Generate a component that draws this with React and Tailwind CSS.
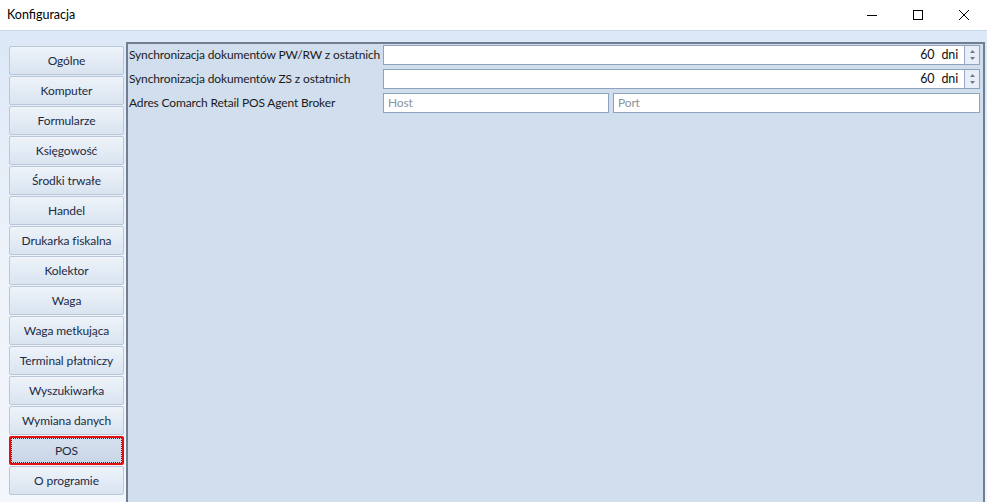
import React from 'react';

const ITEMS = [
  'Ogólne',
  'Komputer',
  'Formularze',
  'Księgowość',
  'Środki trwałe',
  'Handel',
  'Drukarka fiskalna',
  'Kolektor',
  'Waga',
  'Waga metkująca',
  'Terminal płatniczy',
  'Wyszukiwarka',
  'Wymiana danych',
  'POS',
  'O programie',
];

const font = { fontFamily: 'Lato, "Noto Sans", sans-serif' };

function Spinner() {
  return (
    <div className="w-[15px] h-full flex flex-col items-center justify-center bg-[#e7eef7] border-l border-[#9aabc0] text-[#6b7b8f]">
      <svg width="7" height="14" viewBox="0 0 7 14">
        <path d="M3.5 2 L6 5 L1 5 Z" fill="currentColor" />
        <path d="M1 9 L6 9 L3.5 12 Z" fill="currentColor" />
      </svg>
    </div>
  );
}

function DaysField() {
  return (
    <div className="flex-1 h-[20px] flex bg-white border border-[#8fa3bd]">
      <div className="flex-1 flex items-center justify-end pr-[6px] text-[12.5px] text-[#111]">
        <span>60</span>
        <span className="ml-[7px]">dni</span>
      </div>
      <Spinner />
    </div>
  );
}

export default function App() {
  return (
    <div className="w-[987px] h-[502px] bg-white flex flex-col overflow-hidden" style={font}>
      {/* title bar */}
      <div className="h-[30px] flex items-center justify-between shrink-0">
        <span className="pl-[7px] text-[12.5px] text-black">Konfiguracja</span>
        <div className="flex items-center h-full">
          <div className="w-[46px] flex justify-center">
            <svg width="10" height="10" viewBox="0 0 10 10"><path d="M0 5.5 H10" stroke="#000" strokeWidth="1" /></svg>
          </div>
          <div className="w-[46px] flex justify-center">
            <svg width="10" height="10" viewBox="0 0 10 10"><rect x="0.5" y="0.5" width="9" height="9" fill="none" stroke="#000" strokeWidth="1" /></svg>
          </div>
          <div className="w-[46px] flex justify-center">
            <svg width="10" height="10" viewBox="0 0 10 10"><path d="M0 0 L10 10 M10 0 L0 10" stroke="#000" strokeWidth="1" /></svg>
          </div>
        </div>
      </div>

      {/* body */}
      <div className="flex-1 flex bg-gradient-to-b from-[#dce8f7] via-[#eef3fa] to-[#f3f6fb] border-t border-[#c9d8ec] pt-[11px] pr-[2px]">
        {/* nav */}
        <div className="w-[126px] shrink-0 pl-[9px] pr-[2px] pt-[4px] flex flex-col gap-[1px]">
          {ITEMS.map((item) => {
            const active = item === 'POS';
            return (
              <div
                key={item}
                className={`h-[29px] flex items-center justify-center rounded-[2px] text-[12px] tracking-[-0.1px] text-[#1c2b44] whitespace-nowrap ${
                  active
                    ? 'border-2 border-[#e01010] bg-gradient-to-b from-[#d6e1ee] to-[#c9d6e6] outline outline-1 outline-dotted outline-[#333] -outline-offset-3'
                    : 'border border-[#b9c7d8] bg-gradient-to-b from-[#eef3f9] to-[#d9e4f0]'
                }`}
              >
                {item}
              </div>
            );
          })}
        </div>

        {/* content */}
        <div className="flex-1 bg-[#d1deee] border-l-2 border-t-2 border-r-2 border-[#6f7e90] pl-[1px] pr-[3px] pt-[1px] flex flex-col gap-[4px] text-[12px] tracking-[-0.15px] text-[#1b1b1b]">
          <div className="flex items-center h-[20px]">
            <span className="w-[254px] shrink-0 whitespace-nowrap">Synchronizacja dokumentów PW/RW z ostatnich</span>
            <DaysField />
          </div>
          <div className="flex items-center h-[20px]">
            <span className="w-[254px] shrink-0 whitespace-nowrap">Synchronizacja dokumentów ZS z ostatnich</span>
            <DaysField />
          </div>
          <div className="flex items-center h-[20px]">
            <span className="w-[254px] shrink-0 whitespace-nowrap">Adres Comarch Retail POS Agent Broker</span>
            <div className="w-[226px] h-[20px] bg-white border border-[#8fa3bd] flex items-center pl-[4px] text-[#8a94a0]">Host</div>
            <div className="flex-1 ml-[4px] h-[20px] bg-white border border-[#8fa3bd] flex items-center pl-[4px] text-[#8a94a0]">Port</div>
          </div>
        </div>
      </div>
    </div>
  );
}
